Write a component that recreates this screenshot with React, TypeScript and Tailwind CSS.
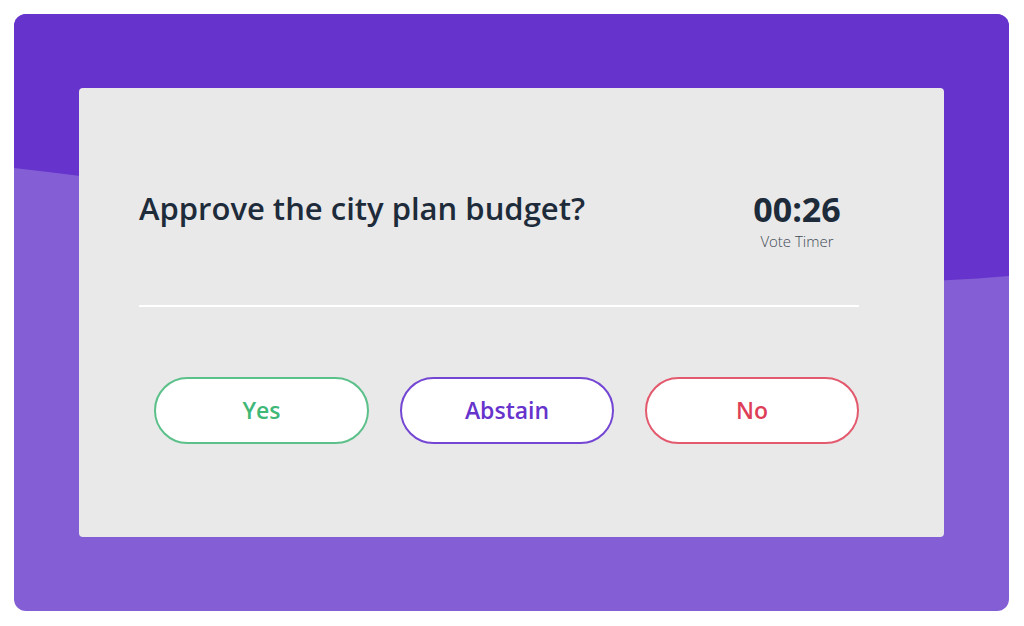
import React from "react";

export default function App() {
  const font = { fontFamily: '"Source Sans Pro", "Open Sans", "Noto Sans", sans-serif' };
  return (
    <div className="w-[1024px] h-[626px] bg-white p-[14px]" style={font}>
      <div className="relative w-[995px] h-[597px] rounded-[12px] overflow-hidden bg-[#845ed4]">
        <svg className="absolute inset-0" width="995" height="597" viewBox="0 0 995 597">
          <path d="M0 0 H995 V262 C665 293 330 190 0 154 Z" fill="#6633cc" />
        </svg>
        <div className="relative pt-[74px] pl-[65px]">
          <div className="w-[865px] h-[449px] bg-[#e9e9e9] rounded-[4px] pl-[60px] pr-[85px] pt-[100px]">
            <div className="flex justify-between items-start">
              <h1 className="text-[31px] leading-[40px] font-semibold text-[#1d2b3a]">
                Approve the city plan budget?
              </h1>
              <div className="w-[124px] flex flex-col items-center mt-[1px]">
                <div className="text-[34px] leading-[40px] font-bold text-[#1d2b3a]">00:26</div>
                <div className="text-[15px] leading-[18px] font-light text-[#3f4a56] mt-[3px]">Vote Timer</div>
              </div>
            </div>
            <div className="h-[2px] bg-white mt-[55px]" />
            <div className="flex gap-[31px] pl-[15px] mt-[70px]">
              <button className="w-[215px] h-[67px] rounded-full bg-white border-2 border-[#5cc08a] text-[#3fb877] text-[23px] font-semibold">
                Yes
              </button>
              <button className="w-[214px] h-[67px] rounded-full bg-white border-2 border-[#7446d4] text-[#6633cc] text-[23px] font-semibold">
                Abstain
              </button>
              <button className="w-[214px] h-[67px] rounded-full bg-white border-2 border-[#e35a6e] text-[#de3f58] text-[23px] font-semibold">
                No
              </button>
            </div>
          </div>
        </div>
      </div>
    </div>
  );
}
